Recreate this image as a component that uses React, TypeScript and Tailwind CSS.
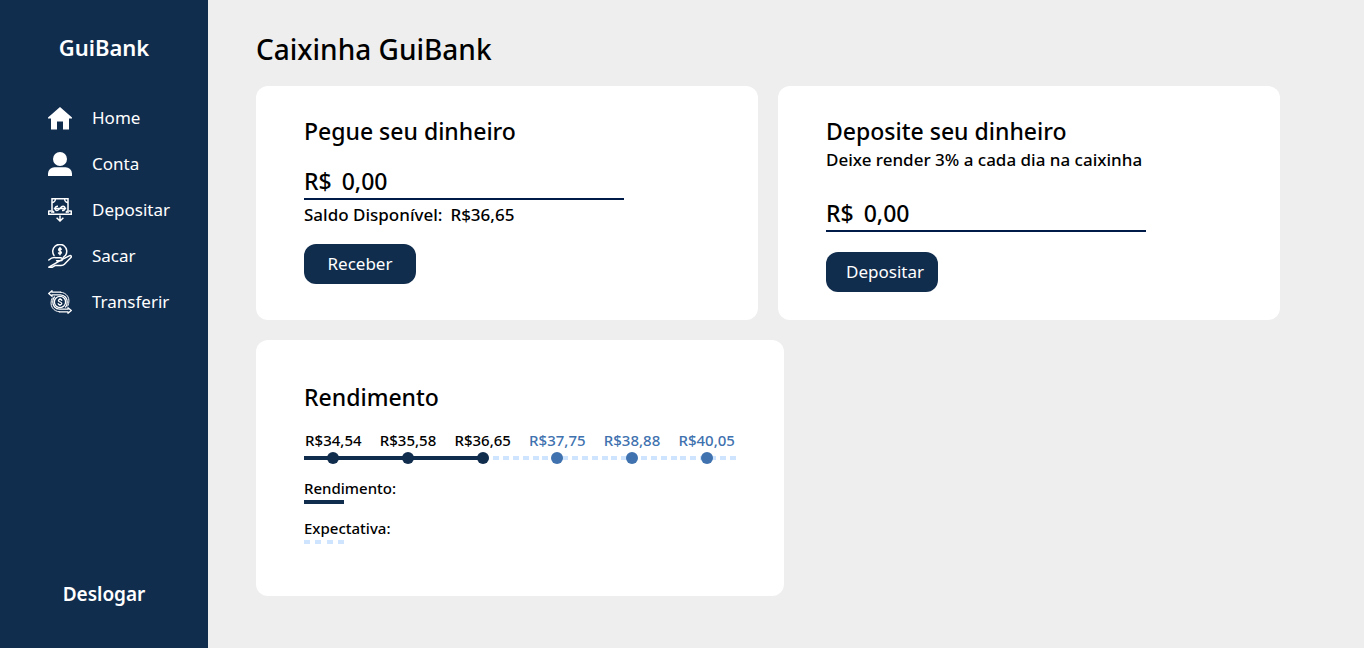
import { useState } from "react";
import type { ReactNode } from "react";

function HomeIcon() {
  return (
    <svg viewBox="0 0 24 24" className="size-6 shrink-0" fill="currentColor" aria-hidden="true">
      <path d="M12 1 24 11.6V12.4H21V23.5H15V15.5H9V23.5H3V12.4H0V11.6Z" />
    </svg>
  );
}

function UserIcon() {
  return (
    <svg viewBox="0 0 24 24" className="size-6 shrink-0" fill="currentColor" aria-hidden="true">
      <circle cx="12" cy="7" r="7" />
      <path d="M0 24V21.5A6.5 6.5 0 0 1 6.5 15.2H17.5A6.5 6.5 0 0 1 24 21.5V24Z" />
    </svg>
  );
}

function DepositIcon() {
  return (
    <svg viewBox="0 0 24 24" className="size-6 shrink-0" fill="none" stroke="currentColor" strokeWidth="1.5" aria-hidden="true">
      <path d="M4 15V.8H20V15" />
      <path d="M.7 12.6V16.2H23.3V12.6M.7 13H3.4M20.6 13H23.3" />
      <path d="M4 4.4A3.4 3.4 0 0 0 7.4 1M20 4.4A3.4 3.4 0 0 1 16.6 1M4.4 12.8 6.2 14.6M19.6 12.8 17.8 14.6" />
      <path d="M10 8.2C6.4 8 6.4 12.6 9 12.6C11.4 12.6 12.6 8.2 15 8.2C17.8 8.2 17.6 12.6 14 12.6M5.8 10.4H18.2" />
      <path d="M12 17.6V23M8.6 19.8 12 23 15.4 19.8" />
    </svg>
  );
}

function WithdrawIcon() {
  return (
    <svg viewBox="0 0 24 24" className="size-6 shrink-0" fill="none" stroke="currentColor" strokeWidth="1.5" strokeLinecap="round" strokeLinejoin="round" aria-hidden="true">
      <path d="M6 11.4A7 7 0 1 1 17.6 11.2L15.4 13.2" />
      <path d="M13.2 5.4C12.8 4.3 10.7 4.3 10.7 5.7C10.7 7.3 13.3 6.9 13.3 8.5C13.3 10 11 10 10.6 8.9M12 3.4V10.8" />
      <path d="M.8 16C3 14 5.4 12.8 8 13.8H12.6C15 13.8 15 16.6 12.6 16.7H8.6M14.8 15.2 21.2 11.8C23 10.9 24 12.6 22.7 13.8L16.4 20.2C15.4 21.2 14.4 21.4 13 21.4H7.4L4.4 23.2H.8Z" />
    </svg>
  );
}

function TransferIcon() {
  return (
    <svg viewBox="0 0 24 24" className="size-6 shrink-0" fill="none" stroke="currentColor" strokeWidth="1.3" strokeLinecap="round" strokeLinejoin="round" aria-hidden="true">
      <circle cx="12" cy="12" r="5.6" />
      <path d="M13.8 10.3C13.5 8.9 10.4 8.9 10.4 10.5C10.4 12.3 13.8 11.7 13.8 13.5C13.8 15.1 10.5 15.1 10.2 13.7M12 8.4V9M12 15V15.6" />
      <path d="M12.6 2.2H4V.7L.7 3.5 4 6.3V4.8H12.4C16.6 5 19.2 8.2 19.2 12C19.2 14 18.6 15.8 17.6 17" />
      <path d="M11.4 21.8H20V23.3L23.3 20.5 20 17.7V19.2H11.6C7.4 19 4.8 15.8 4.8 12C4.8 10 5.4 8.2 6.4 7" />
      <path d="M12.6 2.2C15.4 2.4 18 3.8 19.6 6.2C21.4 9 21.4 12.6 19.8 16M11.4 21.8C8.6 21.6 6 20.2 4.4 17.8C2.6 15 2.6 11.4 4.2 8" strokeWidth="1" />
    </svg>
  );
}

const links: { label: string; icon: ReactNode }[] = [
  { label: "Home", icon: <HomeIcon /> },
  { label: "Conta", icon: <UserIcon /> },
  { label: "Depositar", icon: <DepositIcon /> },
  { label: "Sacar", icon: <WithdrawIcon /> },
  { label: "Transferir", icon: <TransferIcon /> },
];

const points = [
  { value: "R$34,54", expected: false },
  { value: "R$35,58", expected: false },
  { value: "R$36,65", expected: false },
  { value: "R$37,75", expected: true },
  { value: "R$38,88", expected: true },
  { value: "R$40,05", expected: true },
];

function Sidebar() {
  return (
    <aside className="flex w-52 shrink-0 flex-col items-center bg-[#112d4e] pt-8 pb-10 text-white">
      <p className="text-[22px] leading-[30px] font-semibold">GuiBank</p>
      <nav className="mt-[42px] w-full pr-4 pl-12">
        <ul className="flex flex-col gap-[18px]">
          {links.map((link) => (
            <li key={link.label}>
              <a href="#" className="flex h-7 items-center gap-5 text-[17px]">
                {link.icon}
                {link.label}
              </a>
            </li>
          ))}
        </ul>
      </nav>
      <button type="button" className="mt-auto text-[19px] leading-7 font-semibold">
        Deslogar
      </button>
    </aside>
  );
}

function AmountField({ id, label }: { id: string; label: string }) {
  const [amount, setAmount] = useState("0,00");
  return (
    <div className="flex h-9 w-80 max-w-full items-center gap-2.5 border-b-2 border-[#001b48] text-[23px] font-medium">
      <label htmlFor={id}>R$</label>
      <input
        id={id}
        aria-label={label}
        value={amount}
        onChange={(event) => setAmount(event.target.value)}
        className="w-full min-w-0 bg-transparent outline-none"
      />
    </div>
  );
}

function ActionButton({ children }: { children: ReactNode }) {
  return (
    <button type="button" className="h-10 w-28 rounded-xl bg-[#112d4e] px-5 text-[17px] text-white">
      {children}
    </button>
  );
}

function Dashes({ count }: { count: number }) {
  return (
    <div className="flex h-1 w-full justify-between" aria-hidden="true">
      {Array.from({ length: count }, (_, index) => (
        <span key={index} className="w-1.5 bg-[#cfe4ff]" />
      ))}
    </div>
  );
}

function YieldChart() {
  return (
    <div>
      <ol className="grid grid-cols-6 gap-4 text-[15px] leading-5 font-medium">
        {points.map((point) => (
          <li key={point.value} className={point.expected ? "flex justify-center text-[#3f72af]" : "flex justify-center"}>
            {point.value}
          </li>
        ))}
      </ol>
      <div className="mt-0.5 grid items-center" aria-hidden="true">
        <div className="col-start-1 row-start-1 flex items-center">
          <div className="h-1 w-[41.5%] shrink-0 bg-[#112d4e]" />
          <Dashes count={26} />
        </div>
        <div className="col-start-1 row-start-1 grid grid-cols-6 justify-items-center gap-4">
          {points.map((point) => (
            <span
              key={point.value}
              className={point.expected ? "size-3 rounded-full bg-[#3f72af]" : "size-3 rounded-full bg-[#112d4e]"}
            />
          ))}
        </div>
      </div>
    </div>
  );
}

export default function App() {
  return (
    <div className="flex min-h-screen bg-[#eeeeee] font-['Segoe_UI','Noto_Sans',sans-serif] text-black">
      <Sidebar />
      <main className="min-w-0 flex-1 px-12 pt-7">
        <div className="max-w-5xl">
          <h1 className="text-[28px] leading-[42px] font-medium">Caixinha GuiBank</h1>
          <div className="mt-4 grid grid-cols-2 gap-5">
            <section className="rounded-xl bg-white px-12 pt-7 pb-9">
              <h2 className="text-[23px] leading-[34px] font-medium">Pegue seu dinheiro</h2>
              <div className="mt-4">
                <AmountField id="withdraw-amount" label="Valor a receber" />
              </div>
              <p className="mt-0.5 mb-4 flex gap-2 text-[17px] leading-[26px] font-medium">
                <span>Saldo Disponível:</span>
                <span>R$36,65</span>
              </p>
              <ActionButton>Receber</ActionButton>
            </section>
            <section className="rounded-xl bg-white px-12 pt-7 pb-7">
              <h2 className="text-[23px] leading-[34px] font-medium">Deposite seu dinheiro</h2>
              <p className="text-[17px] leading-6 font-medium">Deixe render 3% a cada dia na caixinha</p>
              <div className="mt-6 mb-5">
                <AmountField id="deposit-amount" label="Valor a depositar" />
              </div>
              <ActionButton>Depositar</ActionButton>
            </section>
          </div>
          <section className="mt-5 w-[528px] max-w-full rounded-xl bg-white px-12 pt-10 pb-[52px]">
            <h2 className="text-[23px] leading-[34px] font-medium">Rendimento</h2>
            <div className="mt-4">
              <YieldChart />
            </div>
            <div className="mt-[14px] flex flex-col gap-[14px] text-[15px] leading-5 font-medium">
              <div>
                <p>Rendimento:</p>
                <div className="mt-0.5 h-1 w-10 bg-[#112d4e]" />
              </div>
              <div>
                <p>Expectativa:</p>
                <div className="mt-0.5 w-10">
                  <Dashes count={4} />
                </div>
              </div>
            </div>
          </section>
        </div>
      </main>
    </div>
  );
}
